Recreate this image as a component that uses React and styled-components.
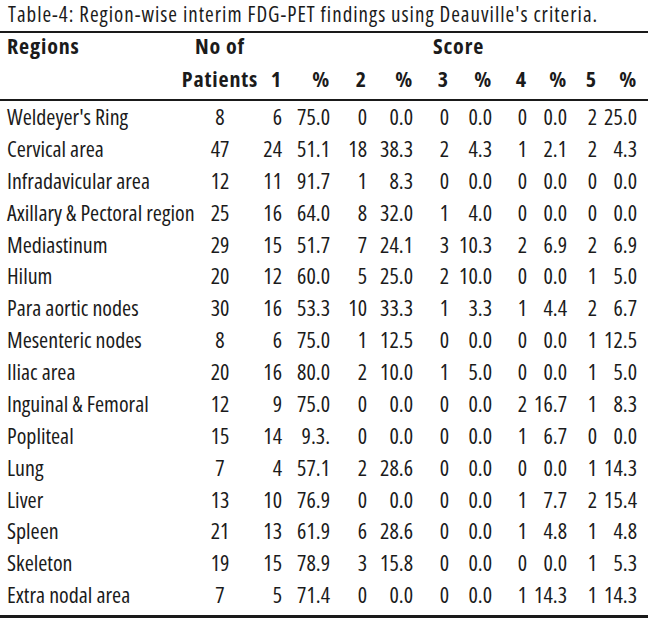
import React from 'react';
import styled, { createGlobalStyle } from 'styled-components';

const GlobalStyle = createGlobalStyle`
  html, body {
    margin: 0;
    padding: 0;
    background: #ffffff;
  }
  body {
    font-family: "Open Sans", "Liberation Sans", sans-serif;
    font-stretch: 75%;
    color: #1b1b1b;
  }
`;

const Page = styled.div`
  width: 650px;
  height: 629px;
  background: #fff;
  overflow: hidden;
`;

const Caption = styled.div`
  padding: 0 0 0 8px;
  height: 31px;
  line-height: 28px;
  font-size: 21px;
  letter-spacing: 1px;
  white-space: nowrap;
`;

const Table = styled.table`
  width: 648px;
  border-collapse: collapse;
  table-layout: fixed;
  border-top: 2px solid #1a1a1a;
  border-bottom: 3px solid #1a1a1a;
  font-size: 22px;
`;

const HeadRow = styled.tr`
  height: ${p => p.$h}px;
  line-height: ${p => p.$h}px;
  ${p => p.$rule && 'border-bottom: 2px solid #1a1a1a;'}
`;

const Th = styled.th`
  padding: 0;
  font-weight: bold;
  letter-spacing: 0.85px;
  white-space: nowrap;
  text-align: ${p => p.$align || 'right'};
  padding-left: ${p => p.$pl || 0}px;
  vertical-align: middle;
`;

const Row = styled.tr`
  height: 31.87px;
  line-height: 31.87px;
`;

const Spacer = styled.tr`
  height: ${p => p.$h}px;
  td { padding: 0; }
`;

const Td = styled.td`
  padding: 0;
  white-space: nowrap;
  text-align: ${p => p.$align || 'right'};
  padding-left: ${p => p.$pl || 0}px;
`;

// column widths: right edges of numbers sit at 282, 330, 367, 413, 449, 492, 527, 567, 597, 637
const widths = [180, 80, 22, 48, 37, 46, 36, 43, 35, 40, 30, 40, 11];

const rows = [
  ["Weldeyer's Ring", 8, 6, '75.0', 0, '0.0', 0, '0.0', 0, '0.0', 2, '25.0'],
  ['Cervical area', 47, 24, '51.1', 18, '38.3', 2, '4.3', 1, '2.1', 2, '4.3'],
  ['Infradavicular area', 12, 11, '91.7', 1, '8.3', 0, '0.0', 0, '0.0', 0, '0.0'],
  ['Axillary & Pectoral region', 25, 16, '64.0', 8, '32.0', 1, '4.0', 0, '0.0', 0, '0.0'],
  ['Mediastinum', 29, 15, '51.7', 7, '24.1', 3, '10.3', 2, '6.9', 2, '6.9'],
  ['Hilum', 20, 12, '60.0', 5, '25.0', 2, '10.0', 0, '0.0', 1, '5.0'],
  ['Para aortic nodes', 30, 16, '53.3', 10, '33.3', 1, '3.3', 1, '4.4', 2, '6.7'],
  ['Mesenteric nodes', 8, 6, '75.0', 1, '12.5', 0, '0.0', 0, '0.0', 1, '12.5'],
  ['Iliac area', 20, 16, '80.0', 2, '10.0', 1, '5.0', 0, '0.0', 1, '5.0'],
  ['Inguinal & Femoral', 12, 9, '75.0', 0, '0.0', 0, '0.0', 2, '16.7', 1, '8.3'],
  ['Popliteal', 15, 14, '9.3.', 0, '0.0', 0, '0.0', 1, '6.7', 0, '0.0'],
  ['Lung', 7, 4, '57.1', 2, '28.6', 0, '0.0', 0, '0.0', 1, '14.3'],
  ['Liver', 13, 10, '76.9', 0, '0.0', 0, '0.0', 1, '7.7', 2, '15.4'],
  ['Spleen', 21, 13, '61.9', 6, '28.6', 0, '0.0', 1, '4.8', 1, '4.8'],
  ['Skeleton', 19, 15, '78.9', 3, '15.8', 0, '0.0', 0, '0.0', 1, '5.3'],
  ['Extra nodal area', 7, 5, '71.4', 0, '0.0', 0, '0.0', 1, '14.3', 1, '14.3'],
];

const subHeads = ['1', '%', '2', '%', '3', '%', '4', '%', '5', '%'];

const App = () => (
  <Page>
    <GlobalStyle />
    <Caption>Table-4: Region-wise interim FDG-PET findings using Deauville's criteria.</Caption>
    <Table>
      <colgroup>
        {widths.map((w, i) => <col key={i} style={{ width: w }} />)}
      </colgroup>
      <thead>
        <HeadRow $h={25}>
          <Th $align="left" $pl={7}>Regions</Th>
          <Th $align="center">No of</Th>
          <Th colSpan={10} $align="center" $pl={20}>Score</Th>
          <Th />
        </HeadRow>
        <HeadRow $h={41} $rule>
          <Th />
          <Th $align="center">Patients</Th>
          {subHeads.map((h, i) => <Th key={i}>{h}</Th>)}
          <Th />
        </HeadRow>
      </thead>
      <tbody>
        <Spacer $h={1}><td colSpan={13} /></Spacer>
        {rows.map((r, i) => (
          <Row key={i}>
            <Td $align="left" $pl={7}>{r[0]}</Td>
            <Td $align="center">{r[1]}</Td>
            {r.slice(2).map((v, j) => <Td key={j}>{v}</Td>)}
            <Td />
          </Row>
        ))}
        <Spacer $h={5}><td colSpan={13} /></Spacer>
      </tbody>
    </Table>
  </Page>
);

export default App;
